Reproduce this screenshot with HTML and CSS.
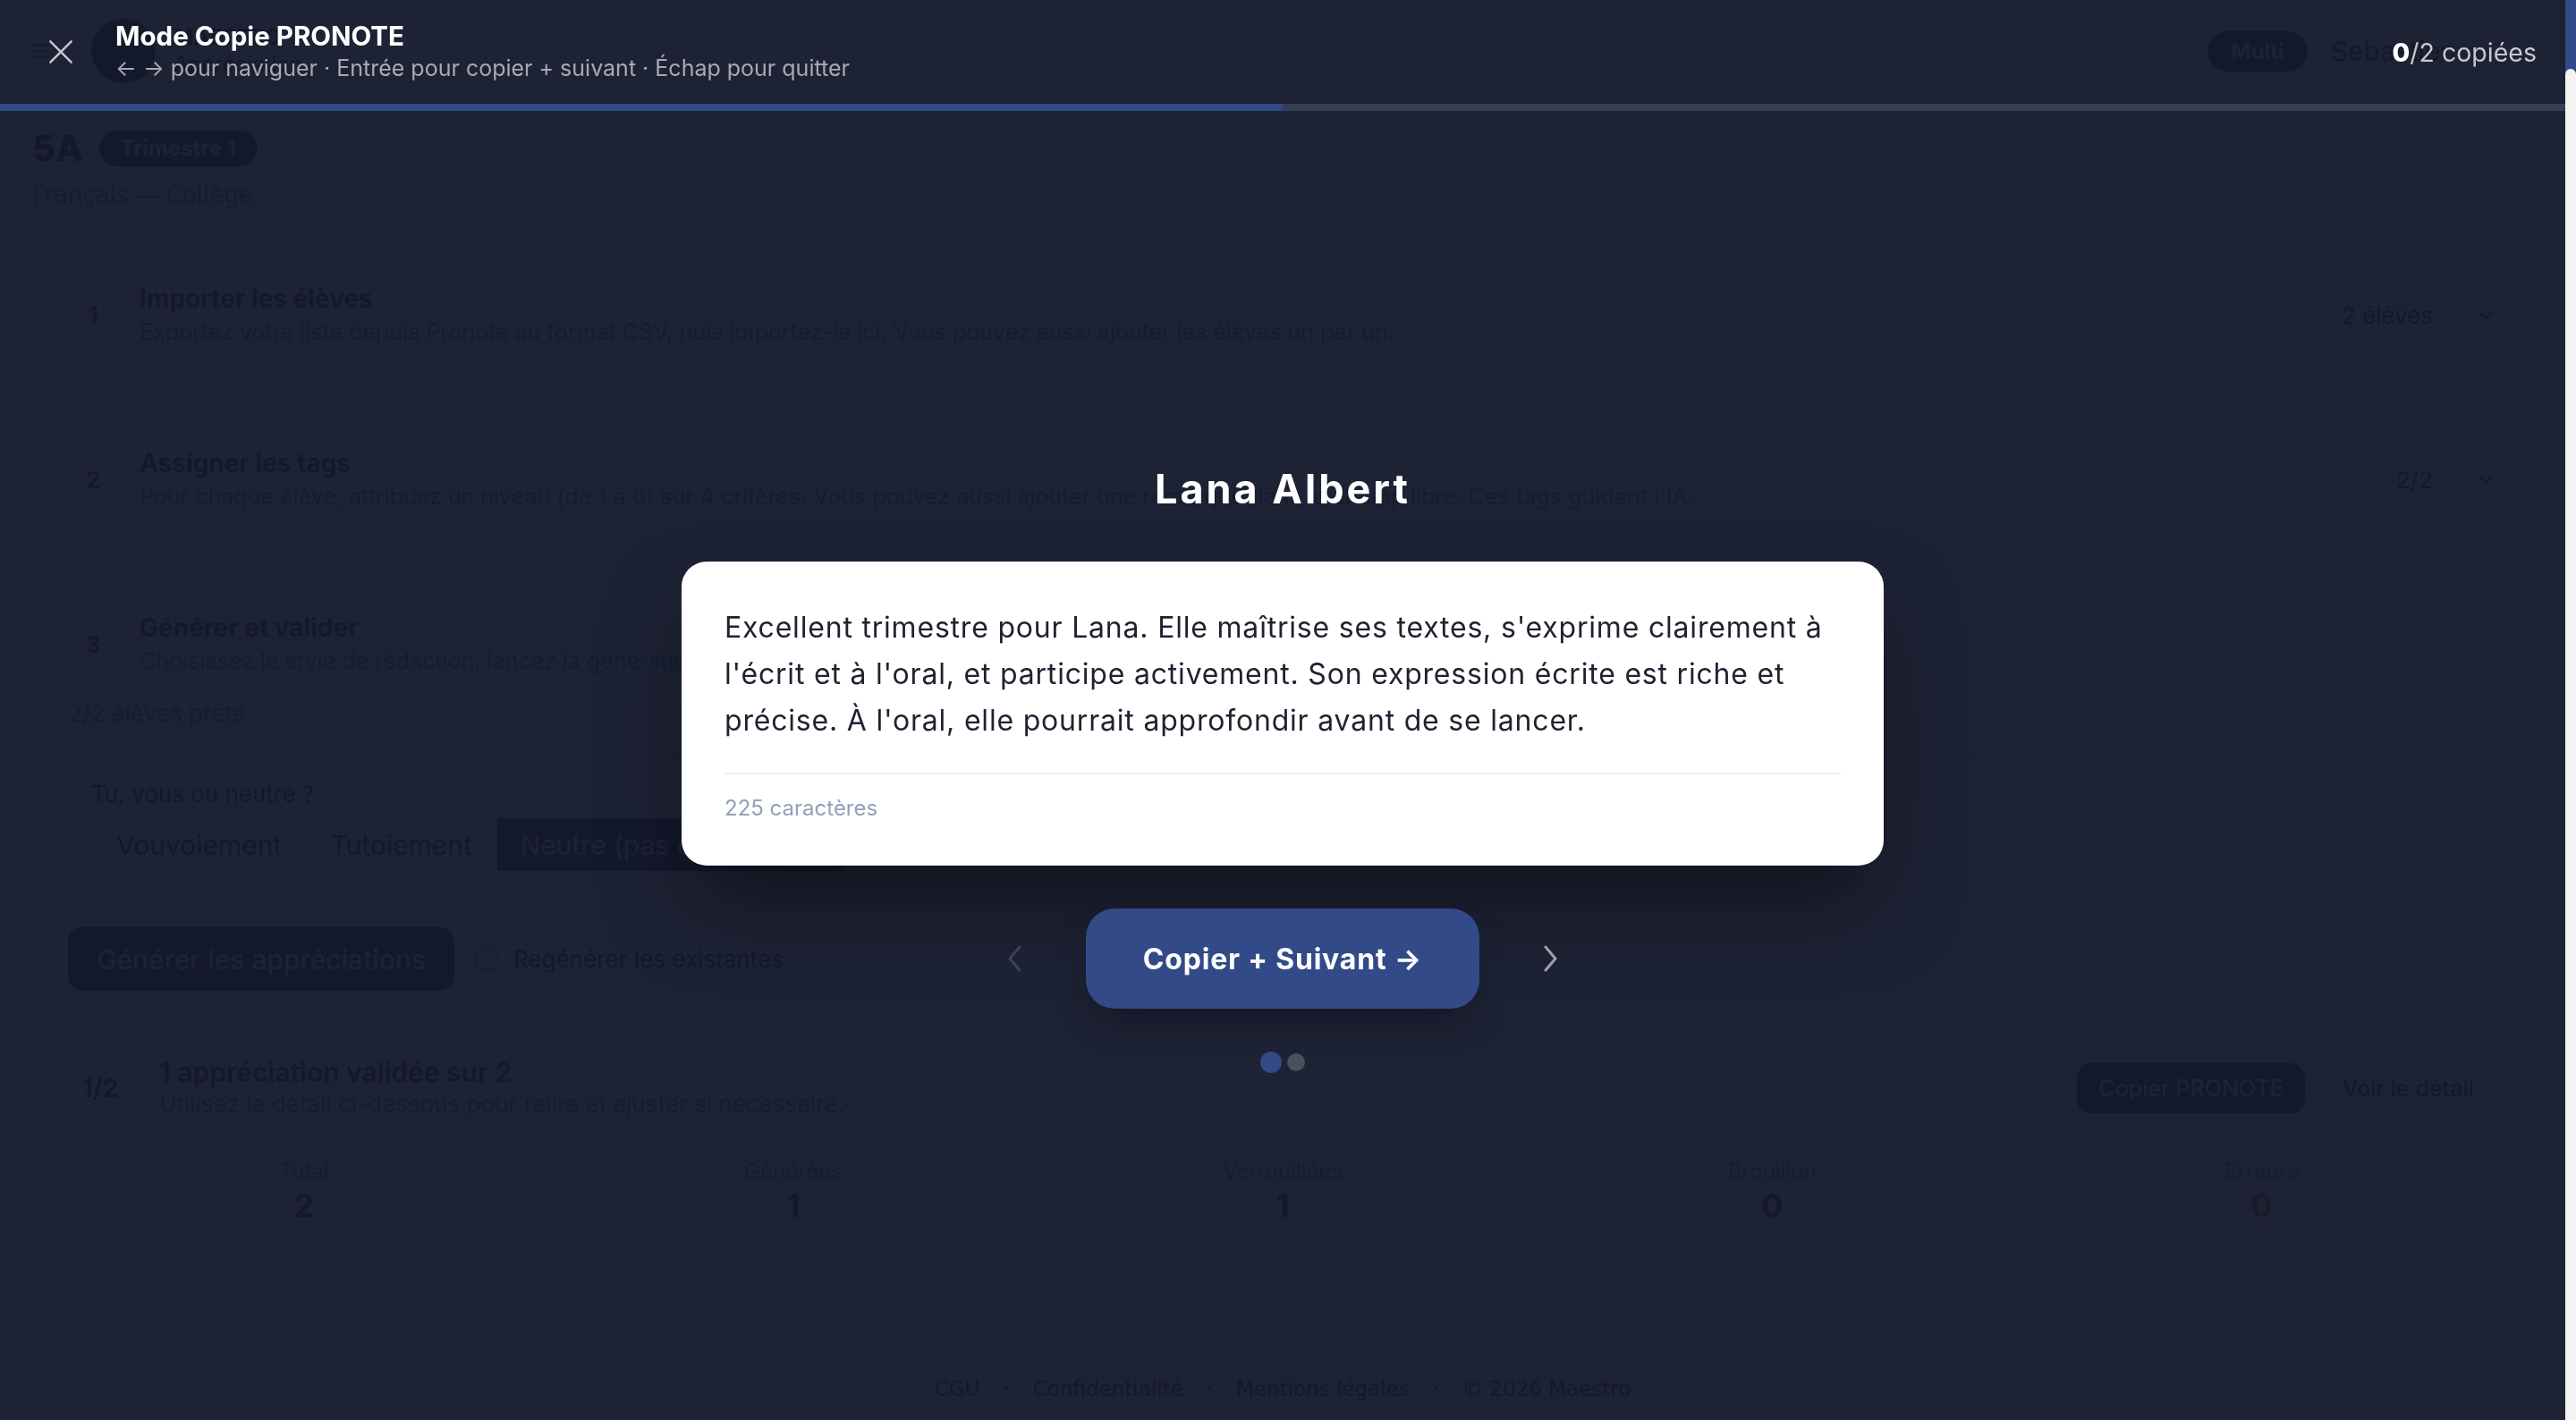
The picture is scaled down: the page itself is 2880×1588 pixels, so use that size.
FILE: index.html
```html
<!DOCTYPE html>
<html lang="fr">
<head>
    <meta charset="UTF-8">
    <meta name="viewport" content="width=device-width, initial-scale=1.0">
    <title>Maestro Appréciation — 5A</title>
    <link rel="stylesheet" href="styles.css">
</head>
<body>
<div class="app">
    <div class="page">
        <header class="site-header">
            <svg class="menu-icon" viewBox="0 0 24 24" width="26" height="26" fill="none" stroke="currentColor" stroke-width="2" stroke-linecap="round"><path d="M4 6h16M4 12h16M4 18h16"/></svg>
            <div class="brand">
                <div class="brand-logo"></div>
                <div class="brand-name"><strong>MAESTRO</strong><span>Appréciation</span></div>
            </div>
            <div class="header-right">
                <span class="plan-pill">Multi</span>
                <span class="user-name">Sebastien</span>
            </div>
        </header>

        <main class="content">
            <div class="class-head">
                <h1>5A</h1>
                <span class="term-pill">Trimestre 1</span>
            </div>
            <p class="class-sub">Français — Collège</p>

            <section class="step-card">
                <div class="step-row">
                    <div class="step-num">1</div>
                    <div class="step-text">
                        <h2>Importer les élèves</h2>
                        <p>Exportez votre liste depuis Pronote au format CSV, puis importez-la ici. Vous pouvez aussi ajouter les élèves un par un.</p>
                    </div>
                    <div class="step-meta">2 élèves <svg viewBox="0 0 24 24" width="26" height="26" fill="none" stroke="currentColor" stroke-width="2"><path d="M6 9l6 6 6-6"/></svg></div>
                </div>
            </section>

            <section class="step-card">
                <div class="step-row">
                    <div class="step-num">2</div>
                    <div class="step-text">
                        <h2>Assigner les tags</h2>
                        <p>Pour chaque élève, attribuez un niveau (de 1 à 6) sur 4 critères. Vous pouvez aussi ajouter une remarque dans le champ libre. Ces tags guident l'IA.</p>
                    </div>
                    <div class="step-meta">2/2 <svg viewBox="0 0 24 24" width="26" height="26" fill="none" stroke="currentColor" stroke-width="2"><path d="M6 9l6 6 6-6"/></svg></div>
                </div>
            </section>

            <section class="step-card">
                <div class="step-row">
                    <div class="step-num">3</div>
                    <div class="step-text">
                        <h2>Générer et valider</h2>
                        <p>Choisissez le style de rédaction, lancez la génération, puis relisez et validez chaque appréciation.</p>
                    </div>
                </div>
                <p class="ready">2/2 élèves prêts</p>

                <div class="style-panel">
                    <p class="panel-label">Tu, vous ou neutre ?</p>
                    <div class="segmented">
                        <span>Vouvoiement</span>
                        <span>Tutoiement</span>
                        <span class="active">Neutre (pas de pronom)</span>
                    </div>
                </div>

                <div class="generate-row">
                    <button class="btn-dark">Générer les appréciations</button>
                    <label class="check"><span class="box"></span>Regénérer les existantes</label>
                </div>

                <div class="summary">
                    <div class="summary-row">
                        <div class="summary-count">1/2</div>
                        <div class="summary-text">
                            <h3>1 appréciation validée sur 2</h3>
                            <p>Utilisez le détail ci-dessous pour relire et ajuster si nécessaire.</p>
                        </div>
                        <div class="summary-actions">
                            <button class="btn-small dark">Copier PRONOTE</button>
                            <button class="btn-small outline">Voir le détail</button>
                        </div>
                    </div>
                    <div class="stats">
                        <div class="stat"><span>Total</span><b>2</b></div>
                        <div class="stat"><span>Générées</span><b>1</b></div>
                        <div class="stat"><span>Verrouillées</span><b>1</b></div>
                        <div class="stat"><span>Brouillon</span><b>0</b></div>
                        <div class="stat"><span>Erreurs</span><b class="err">0</b></div>
                    </div>
                </div>
            </section>
        </main>

        <footer class="site-footer">
            <a>CGU</a><i>·</i><a>Confidentialité</a><i>·</i><a>Mentions légales</a><i>·</i><span>© 2026 Maestro</span>
        </footer>
    </div>
    <div class="scrollbar"><div class="thumb"></div></div>
</div>

<!-- copy mode overlay -->
<div class="copy-mode">
    <div class="copy-bar">
        <button class="close-btn" aria-label="Fermer">
            <svg viewBox="0 0 24 24" width="40" height="40" fill="none" stroke="currentColor" stroke-width="1.5" stroke-linecap="round"><path d="M5 5l14 14M19 5L5 19"/></svg>
        </button>
        <div class="copy-title">
            <strong>Mode Copie PRONOTE</strong>
            <span>← → pour naviguer · Entrée pour copier + suivant · Échap pour quitter</span>
        </div>
        <div class="copy-count"><b>0</b>/2 copiées</div>
    </div>
    <div class="copy-progress"><div class="copy-progress-fill" style="width: 50%"></div></div>

    <div class="copy-body">
        <h2 class="student-name">Lana Albert</h2>
        <div class="appreciation-card">
            <p class="appreciation-text">Excellent trimestre pour Lana. Elle maîtrise ses textes, s'exprime clairement à l'écrit et à l'oral, et participe activement. Son expression écrite est riche et précise. À l'oral, elle pourrait approfondir avant de se lancer.</p>
            <div class="appreciation-foot">225 caractères</div>
        </div>
        <div class="copy-actions">
            <button class="nav-btn" disabled>
                <svg viewBox="0 0 16 32" width="16" height="32" fill="none" stroke="currentColor" stroke-width="3" stroke-linecap="round" stroke-linejoin="round"><path d="M14 3L3 16l11 13"/></svg>
            </button>
            <button class="copy-next">Copier + Suivant →</button>
            <button class="nav-btn next">
                <svg viewBox="0 0 16 32" width="16" height="32" fill="none" stroke="currentColor" stroke-width="3" stroke-linecap="round" stroke-linejoin="round"><path d="M2 3l11 13L2 29"/></svg>
            </button>
        </div>
        <div class="dots"><span class="on"></span><span></span></div>
    </div>
</div>
</body>
</html>
```

FILE: styles.css
```css
* {
    box-sizing: border-box;
}
html, body {
    margin: 0;
    height: 100%;
    overflow: hidden;
}
body {
    font-family: Inter, "Noto Sans", sans-serif;
    color: #0f172a;
    background: #f8fafc;
}
button {
    font-family: inherit;
    border: none;
    cursor: pointer;
}
p, h1, h2, h3 {
    margin: 0;
}

/* page underneath */
.app {
    display: flex;
    height: 100%;
}
.page {
    flex: 1;
    min-width: 0;
}
.scrollbar {
    width: 12px;
    background: #33498a;
    padding-top: 77px;
    display: flex;
}
.thumb {
    flex: 1;
    border-radius: 6px 6px 0 0;
    background: #f3f3f3;
}
.site-header {
    height: 116px;
    display: flex;
    align-items: center;
    padding: 0 32px;
    gap: 44px;
    background: #fff;
    border-bottom: 2px solid #e2e8f0;
}
.menu-icon {
    color: #475569;
}
.brand {
    display: flex;
    align-items: center;
    gap: 20px;
}
.brand-logo {
    width: 72px;
    height: 72px;
    border-radius: 50%;
    background: #0f172a;
}
.brand-name {
    display: flex;
    flex-direction: column;
    font-size: 24px;
    line-height: 30px;
}
.header-right {
    margin-left: auto;
    padding-right: 90px;
    display: flex;
    align-items: center;
    gap: 26px;
}
.plan-pill {
    background: #0f172a;
    color: #fff;
    font-weight: 700;
    font-size: 24px;
    padding: 8px 26px;
    border-radius: 24px;
}
.user-name {
    font-size: 30px;
    color: #0f172a;
}

.content {
    padding: 26px 36px 0;
}
.class-head {
    display: flex;
    align-items: center;
    gap: 18px;
}
.class-head h1 {
    font-size: 40px;
    line-height: 48px;
    font-weight: 800;
}
.term-pill {
    background: #0f172a;
    color: #fff;
    font-weight: 700;
    font-size: 24px;
    line-height: 40px;
    padding: 0 24px;
    border-radius: 20px;
}
.class-sub {
    margin-top: 8px;
    font-family: "DejaVu Sans", sans-serif;
    font-size: 26px;
    line-height: 40px;
    color: #2563eb;
}

.step-card {
    margin-top: 50px;
    background: #fff;
    border: 2px solid #e2e8f0;
    border-radius: 24px;
    padding: 26px 38px;
}
.step-card + .step-card {
    margin-top: 55px;
}
.step-row {
    display: flex;
    align-items: center;
    gap: 24px;
}
.step-num {
    width: 56px;
    height: 56px;
    border-radius: 50%;
    border: 2px solid #e2e8f0;
    display: flex;
    align-items: center;
    justify-content: center;
    font-weight: 700;
    font-size: 26px;
    flex-shrink: 0;
}
.step-text {
    flex: 1;
}
.step-text h2 {
    font-size: 28px;
    line-height: 36px;
    font-weight: 700;
}
.step-text p {
    margin-top: 1px;
    font-size: 25px;
    line-height: 36px;
    color: #2563eb;
}
.step-meta {
    display: flex;
    align-items: center;
    gap: 46px;
    font-size: 26px;
    color: #0f172a;
}
.ready {
    margin-top: 23px;
    font-size: 26px;
    line-height: 36px;
    color: #2563eb;
}
.style-panel {
    margin-top: 30px;
    border: 2px solid #e2e8f0;
    border-radius: 24px;
    padding: 22px 24px 26px;
}
.panel-label {
    font-size: 26px;
    line-height: 36px;
}
.segmented {
    margin-top: 7px;
    display: inline-flex;
    height: 63px;
    border: 2px solid #e2e8f0;
    border-radius: 16px;
    overflow: hidden;
}
.segmented span {
    display: flex;
    align-items: center;
    padding: 0 26px;
    font-size: 30px;
    color: #0f172a;
    border-right: 2px solid #e2e8f0;
}
.segmented .active {
    background: #0f172a;
    color: #fff;
    border: none;
}
.generate-row {
    margin-top: 33px;
    display: flex;
    align-items: center;
    gap: 24px;
}
.btn-dark {
    height: 71px;
    padding: 0 32px;
    border-radius: 16px;
    background: #0f172a;
    color: #fff;
    font-size: 30px;
    font-weight: 500;
}
.check {
    display: flex;
    align-items: center;
    gap: 18px;
    font-size: 26px;
    color: #0f172a;
}
.check .box {
    width: 24px;
    height: 24px;
    border: 2px solid #94a3b8;
    border-radius: 5px;
}
.summary {
    margin-top: 33px;
    border-top: 2px solid #e2e8f0;
    padding-top: 38px;
}
.summary-row {
    display: flex;
    align-items: center;
    gap: 30px;
}
.summary-count {
    width: 72px;
    height: 72px;
    border-radius: 50%;
    border: 2px solid #e2e8f0;
    display: flex;
    align-items: center;
    justify-content: center;
    font-weight: 700;
    font-size: 28px;
}
.summary-text {
    flex: 1;
}
.summary-text h3 {
    font-size: 30px;
    line-height: 36px;
    font-weight: 600;
}
.summary-text p {
    font-size: 26px;
    line-height: 36px;
    color: #2563eb;
}
.summary-actions {
    display: flex;
    gap: 16px;
}
.btn-small {
    height: 56px;
    padding: 0 24px;
    border-radius: 16px;
    font-size: 25px;
    font-weight: 500;
}
.btn-small.dark {
    background: #0f172a;
    color: #fff;
}
.btn-small.outline {
    background: #fff;
    border: 2px solid #e2e8f0;
    color: #0f172a;
}
.stats {
    margin-top: 27px;
    display: grid;
    grid-template-columns: repeat(5, 1fr);
    gap: 20px;
}
.stat {
    height: 109px;
    border: 2px solid #e2e8f0;
    border-radius: 20px;
    display: flex;
    flex-direction: column;
    align-items: center;
    padding-top: 12px;
}
.stat span {
    font-size: 24px;
    line-height: 32px;
    color: #2563eb;
}
.stat b {
    margin-top: 2px;
    font-size: 36px;
    line-height: 40px;
}
.stat b.err {
    color: #dc2626;
}
.site-footer {
    margin-top: 118px;
    display: flex;
    justify-content: center;
    gap: 26px;
    font-family: "DejaVu Sans", sans-serif;
    font-size: 23px;
    line-height: 36px;
    color: #0f172a;
}
.site-footer i {
    font-style: normal;
}

/* copy mode overlay */
.copy-mode {
    position: fixed;
    top: 0;
    left: 0;
    right: 12px;
    bottom: 0;
    background: rgba(20, 25, 44, 0.96);
    display: flex;
    flex-direction: column;
}
.copy-bar {
    height: 116px;
    display: flex;
    align-items: center;
    padding: 0 32px 0 36px;
    gap: 29px;
}
.close-btn {
    width: 64px;
    height: 64px;
    background: none;
    color: #c3c7ce;
    display: flex;
    align-items: center;
    justify-content: center;
}
.copy-title {
    display: flex;
    flex-direction: column;
    flex: 1;
}
.copy-title strong {
    color: #fff;
    font-size: 29.5px;
    line-height: 36px;
    font-weight: 700;
}
.copy-title span {
    color: #a6aab3;
    font-size: 25px;
    line-height: 36px;
}
.copy-count {
    color: #c5c8ce;
    font-size: 28.5px;
}
.copy-count b {
    color: #fff;
    font-weight: 800;
}
.copy-progress {
    height: 8px;
    background: #353f57;
}
.copy-progress-fill {
    height: 100%;
    background: #324a87;
}
.copy-body {
    flex: 1;
    display: flex;
    flex-direction: column;
    align-items: center;
    justify-content: center;
    padding-top: 2px;
}
.student-name {
    color: #fff;
    font-size: 45px;
    line-height: 66px;
    font-weight: 700;
    letter-spacing: 3px;
    margin-bottom: 48px;
}
.appreciation-card {
    width: 1344px;
    background: #fff;
    border-radius: 28px;
    padding: 48px;
    box-shadow: 0 50px 100px -20px rgba(0, 0, 0, 0.5);
}
.appreciation-text {
    font-size: 32px;
    line-height: 52px;
    letter-spacing: 0.8px;
    color: #1e2230;
}
.appreciation-foot {
    margin-top: 32px;
    padding-top: 22px;
    border-top: 2px solid #eef1f5;
    font-size: 24px;
    line-height: 32px;
    color: #94a0b8;
}
.copy-actions {
    margin-top: 48px;
    display: flex;
    align-items: center;
    gap: 48px;
}
.nav-btn {
    width: 64px;
    height: 64px;
    background: none;
    color: #9ca1ab;
    display: flex;
    align-items: center;
    justify-content: center;
}
.nav-btn:disabled {
    color: #3b4253;
    cursor: default;
}
.copy-next {
    height: 112px;
    padding: 0 64px;
    border-radius: 32px;
    background: #324a87;
    color: #fff;
    font-size: 32px;
    font-weight: 700;
    letter-spacing: 0.8px;
    box-shadow: 0 20px 40px -10px rgba(0, 0, 0, 0.35);
}
.dots {
    margin-top: 48px;
    display: flex;
    align-items: center;
    gap: 6px;
}
.dots span {
    width: 20px;
    height: 20px;
    border-radius: 50%;
    background: #4a505c;
}
.dots .on {
    width: 24px;
    height: 24px;
    background: #324a87;
}
```
